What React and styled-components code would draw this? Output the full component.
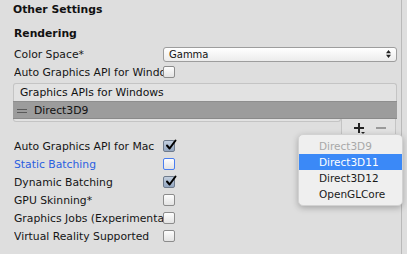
import React from "react";
import styled, { createGlobalStyle, css } from "styled-components";

const Global = createGlobalStyle`
  html, body { margin: 0; padding: 0; background: #dedede; }
  body { font-family: "DejaVu Sans", "Liberation Sans", sans-serif; }
`;

const Frame = styled.div`
  position: relative;
  width: 407px;
  height: 254px;
  overflow: hidden;
  background: #dedede;
  display: flex;
`;

const Panel = styled.div`
  width: 402px;
  border-right: 1px solid #b9b9b9;
  box-sizing: border-box;
  padding: 0 4px 0 13px;
  display: flex;
  flex-direction: column;
  font-size: 10.8px;
  color: #111;
`;

const Heading = styled.div`
  height: ${(p) => p.h}px;
  line-height: ${(p) => p.h}px;
  font-weight: bold;
  margin-left: ${(p) => p.ml || 0}px;
`;

const Row = styled.div`
  height: 18px;
  display: flex;
  align-items: center;
  margin-left: 1px;
`;

const Label = styled.div`
  width: 149px;
  flex: none;
  white-space: nowrap;
  overflow: hidden;
  color: ${(p) => (p.focus ? "#2b5fe0" : "#151515")};
`;

const Box = styled.div`
  width: 12px;
  height: 12px;
  box-sizing: border-box;
  border-radius: 2px;
  border: 1px solid ${(p) => (p.focus ? "#4a7ef0" : p.checked ? "#6f7b8c" : "#8c8c8c")};
  background: ${(p) =>
    p.checked
      ? "linear-gradient(#c3cfdf, #93a6c0)"
      : "linear-gradient(#fdfdfd, #e3e3e3)"};
  position: relative;
`;

const Check = styled.svg`
  position: absolute;
  left: 1px;
  top: -2px;
`;

const Dropdown = styled.div`
  flex: 1;
  height: 15px;
  box-sizing: border-box;
  border: 1px solid #9d9d9d;
  border-radius: 3px;
  background: linear-gradient(#ffffff, #ececec);
  display: flex;
  align-items: center;
  justify-content: space-between;
  padding: 0 5px 0 5px;
  font-size: 10px;
`;

const List = styled.div`
  margin-top: 2px;
  display: flex;
  flex-direction: column;
`;

const ListHeader = styled.div`
  height: 18px;
  box-sizing: border-box;
  border: 1px solid #c4c4c4;
  border-bottom: none;
  border-radius: 3px 3px 0 0;
  background: #e2e2e2;
  display: flex;
  align-items: center;
  padding-left: 6px;
`;

const ListItem = styled.div`
  height: 18px;
  box-sizing: border-box;
  background: #9c9c9c;
  border-top: 1px solid #8e8e8e;
  border-bottom: 1px solid #8a8a8a;
  display: flex;
  align-items: center;
  gap: 7px;
  padding-left: 4px;
`;

const Handle = styled.div`
  width: 10px;
  height: 4px;
  border-top: 1px solid #5a5a5a;
  border-bottom: 1px solid #5a5a5a;
  box-sizing: border-box;
  margin-top: 2px;
`;

const ListBottom = styled.div`
  display: flex;
  height: 18px;
`;

const BottomLeft = styled.div`
  flex: 1;
  height: 2px;
  border-left: 1px solid #c4c4c4;
  border-right: 1px solid #c4c4c4;
  border-bottom: 1px solid #c4c4c4;
  border-radius: 0 0 3px 3px;
  background: #e2e2e2;
`;

const Footer = styled.div`
  width: 55px;
  box-sizing: border-box;
  border: 1px solid #c4c4c4;
  border-top: none;
  border-radius: 0 0 3px 3px;
  background: #e2e2e2;
  display: flex;
  align-items: center;
  justify-content: space-around;
  padding: 0 3px 0 5px;
  margin-right: 1px;
`;

const Spacer = styled.div`
  height: ${(p) => p.h}px;
`;

const Popup = styled.div`
  position: absolute;
  left: 298px;
  top: 134px;
  width: 105px;
  height: 72px;
  box-sizing: border-box;
  padding: 3px 0;
  background: #efefef;
  border-radius: 5px;
  border: 1px solid #d2d2d2;
  box-shadow: 0 2px 6px rgba(0, 0, 0, 0.25);
  font-size: 10.5px;
`;

const MenuItem = styled.div`
  height: 16px;
  line-height: 16px;
  padding-left: 20px;
  color: #1a1a1a;
  ${(p) =>
    p.disabled &&
    css`
      color: #a8a8a8;
    `}
  ${(p) =>
    p.active &&
    css`
      background: #3b89f7;
      color: #fff;
    `}
`;

const Tick = () => (
  <Check width="12" height="12" viewBox="0 0 12 12">
    <path d="M2 6.5 L4.6 9.5 L10.5 1.5" fill="none" stroke="#000" strokeWidth="2" strokeLinecap="round" strokeLinejoin="round" />
  </Check>
);

const Toggle = ({ checked, focus }) => (
  <Box checked={checked} focus={focus}>{checked && <Tick />}</Box>
);

const settings = [
  { label: "Auto Graphics API for Mac", checked: true },
  { label: "Static Batching", focus: true },
  { label: "Dynamic Batching", checked: true },
  { label: "GPU Skinning*" },
  { label: "Graphics Jobs (Experimental)" },
  { label: "Virtual Reality Supported" },
];

export default function App() {
  return (
    <Frame>
      <Global />
      <Panel>
        <Heading h={20} ml={0}>Other Settings</Heading>
        <Spacer h={5} />
        <Heading h={18} ml={1}>Rendering</Heading>
        <Spacer h={2} />
        <Row>
          <Label>Color Space*</Label>
          <Dropdown>
            <span>Gamma</span>
            <svg width="5" height="8" viewBox="0 0 5 8">
              <path d="M0 3.2 L2.5 0 L5 3.2 Z M0 4.8 L2.5 8 L5 4.8 Z" fill="#222" />
            </svg>
          </Dropdown>
        </Row>
        <Row>
          <Label>Auto Graphics API for Windows</Label>
          <Toggle />
        </Row>
        <List>
          <ListHeader>Graphics APIs for Windows</ListHeader>
          <ListItem>
            <Handle />
            <span>Direct3D9</span>
          </ListItem>
          <ListBottom>
            <BottomLeft />
            <Footer>
              <svg width="12" height="12" viewBox="0 0 12 12">
                <path d="M5 1 h2 v4 h4 v2 h-4 v4 h-2 v-4 h-4 v-2 h4 z" fill="#222" />
                <path d="M8 10 h4 l-2 2 z" fill="#222" />
              </svg>
              <svg width="10" height="10" viewBox="0 0 10 10">
                <rect x="0" y="4" width="10" height="2" fill="#9a9a9a" />
              </svg>
            </Footer>
          </ListBottom>
        </List>
        {settings.map((s) => (
          <Row key={s.label}>
            <Label focus={s.focus}>{s.label}</Label>
            <Toggle checked={s.checked} focus={s.focus} />
          </Row>
        ))}
      </Panel>
      <Popup>
        <MenuItem disabled>Direct3D9</MenuItem>
        <MenuItem active>Direct3D11</MenuItem>
        <MenuItem>Direct3D12</MenuItem>
        <MenuItem>OpenGLCore</MenuItem>
      </Popup>
    </Frame>
  );
}
